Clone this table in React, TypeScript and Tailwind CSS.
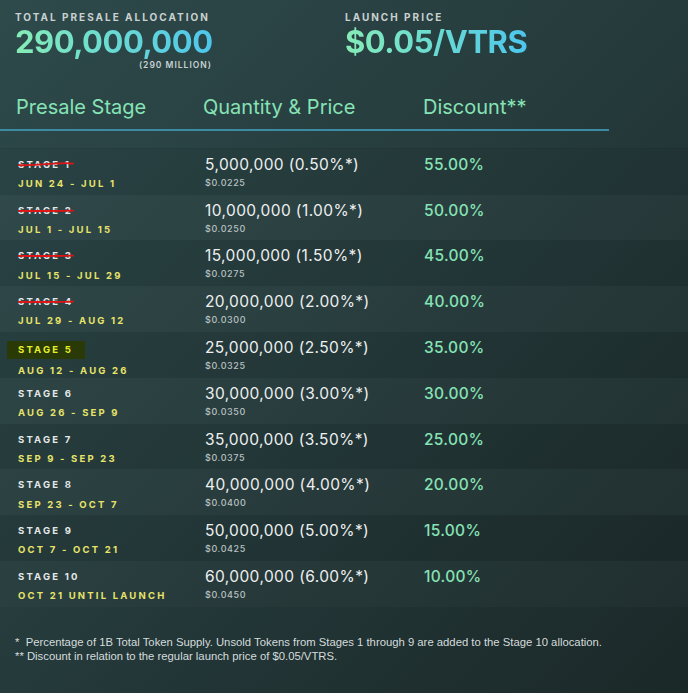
import React from "react"

type Stage = {
  n: number
  dates: string
  qty: string
  price: string
  discount: string
}

const stages: Stage[] = [
  { n: 1, dates: "JUN 24 - JUL 1", qty: "5,000,000 (0.50%*)", price: "$0.0225", discount: "55.00%" },
  { n: 2, dates: "JUL 1 - JUL 15", qty: "10,000,000 (1.00%*)", price: "$0.0250", discount: "50.00%" },
  { n: 3, dates: "JUL 15 - JUL 29", qty: "15,000,000 (1.50%*)", price: "$0.0275", discount: "45.00%" },
  { n: 4, dates: "JUL 29 - AUG 12", qty: "20,000,000 (2.00%*)", price: "$0.0300", discount: "40.00%" },
  { n: 5, dates: "AUG 12 - AUG 26", qty: "25,000,000 (2.50%*)", price: "$0.0325", discount: "35.00%" },
  { n: 6, dates: "AUG 26 - SEP 9", qty: "30,000,000 (3.00%*)", price: "$0.0350", discount: "30.00%" },
  { n: 7, dates: "SEP 9 - SEP 23", qty: "35,000,000 (3.50%*)", price: "$0.0375", discount: "25.00%" },
  { n: 8, dates: "SEP 23 - OCT 7", qty: "40,000,000 (4.00%*)", price: "$0.0400", discount: "20.00%" },
  { n: 9, dates: "OCT 7 - OCT 21", qty: "50,000,000 (5.00%*)", price: "$0.0425", discount: "15.00%" },
  { n: 10, dates: "OCT 21 UNTIL LAUNCH", qty: "60,000,000 (6.00%*)", price: "$0.0450", discount: "10.00%" },
]

const CURRENT = 5

const StageLabel = ({ n }: { n: number }) => {
  if (n < CURRENT) {
    return (
      <div className="relative w-fit text-[9.5px] font-bold tracking-[2.2px] text-[#e4e8e8]">
        STAGE {n}
        <svg className="absolute left-0 top-[3px] h-[6px] w-[56px]" viewBox="0 0 56 6" fill="none">
          {n === 1 ? (
            <path d="M0 4.2 C14 4.6 26 3.2 36 2.6 C44 2 50 1.6 55 2.6" stroke="#e01414" strokeWidth="1.8" strokeLinecap="round" />
          ) : (
            <path d="M0 3.8 C16 4.2 36 4 55 3.6" stroke="#e01414" strokeWidth="1.8" strokeLinecap="round" />
          )}
        </svg>
      </div>
    )
  }
  if (n === CURRENT) {
    return (
      <div className="-ml-[11px] w-[78px] bg-[#2a3a06] py-[2px] pl-[11px] text-[9.5px] font-bold tracking-[2.2px] text-[#e6ef2c]">
        STAGE {n}
      </div>
    )
  }
  return <div className="text-[9.5px] font-bold tracking-[2.2px] text-[#e4e8e8]">STAGE {n}</div>
}

export default function App() {
  return (
    <div
      className="h-[693px] w-full overflow-hidden bg-linear-to-br from-[#2e4a4b] via-[#253a3b] to-[#1b2828] text-white"
      style={{ fontFamily: "Inter, 'Noto Sans', sans-serif" }}
    >
      <div className="flex px-[15px] pt-[10px]">
        <div className="w-[330px]">
          <div className="text-[10px] font-bold tracking-[2px] text-[#c9d1d1]">TOTAL PRESALE ALLOCATION</div>
          <div className="w-fit bg-linear-to-r from-[#86ecb6] to-[#4dc6ec] bg-clip-text text-[31px] font-bold leading-[34px] tracking-[-0.5px] text-transparent">
            290,000,000
          </div>
          <div className="w-[197px] text-right text-[8.5px] font-semibold tracking-[1px] text-[#c9d1d1]">(290 MILLION)</div>
        </div>
        <div>
          <div className="text-[10px] font-bold tracking-[2px] text-[#c9d1d1]">LAUNCH PRICE</div>
          <div className="w-fit bg-linear-to-r from-[#86ecb6] to-[#4dc6ec] bg-clip-text text-[31px] font-bold leading-[34px] tracking-[-0.5px] text-transparent">
            $0.05/VTRS
          </div>
        </div>
      </div>

      <div className="mt-[22px] w-[609px] border-b-2 border-[#3b8ba5] pb-[8px]">
        <div className="grid grid-cols-[187px_220px_1fr] pl-[16px] text-[20px] leading-[27px] text-[#86e3b6]">
          <div>Presale Stage</div>
          <div>Quantity &amp; Price</div>
          <div>Discount**</div>
        </div>
      </div>

      <div className="mt-[17px] border-t border-black/10">
        {stages.map((s, i) => (
          <div
            key={s.n}
            className={`grid h-[45.8px] grid-cols-[187px_219px_1fr] pl-[18px] pt-[7px] ${i % 2 === 0 ? "bg-black/[0.05]" : "bg-white/[0.02]"}`}
          >
            <div className="flex flex-col gap-[5px] pt-[2px]">
              <StageLabel n={s.n} />
              <div className="text-[9.5px] font-bold tracking-[2.2px] text-[#e8e46a]">{s.dates}</div>
            </div>
            <div className="flex flex-col">
              <div className="text-[15.5px] leading-[18px] tracking-[0.4px] text-[#eef0f0]">{s.qty}</div>
              <div className="mt-[2px] text-[9px] font-medium tracking-[0.6px] text-[#b9c2c2]">{s.price}</div>
            </div>
            <div className="text-[15.5px] leading-[18px] font-medium tracking-[0.3px] text-[#86e3b6]">{s.discount}</div>
          </div>
        ))}
      </div>

      <div
        className="mt-[28px] px-[15px] text-[11.3px] leading-[14px] text-[#d4dcdc]"
        style={{ fontFamily: "'Liberation Sans', Arial, sans-serif" }}
      >
        <div>*&nbsp; Percentage of 1B Total Token Supply. Unsold Tokens from Stages 1 through 9 are added to the Stage 10 allocation.</div>
        <div>** Discount in relation to the regular launch price of $0.05/VTRS.</div>
      </div>
    </div>
  )
}
